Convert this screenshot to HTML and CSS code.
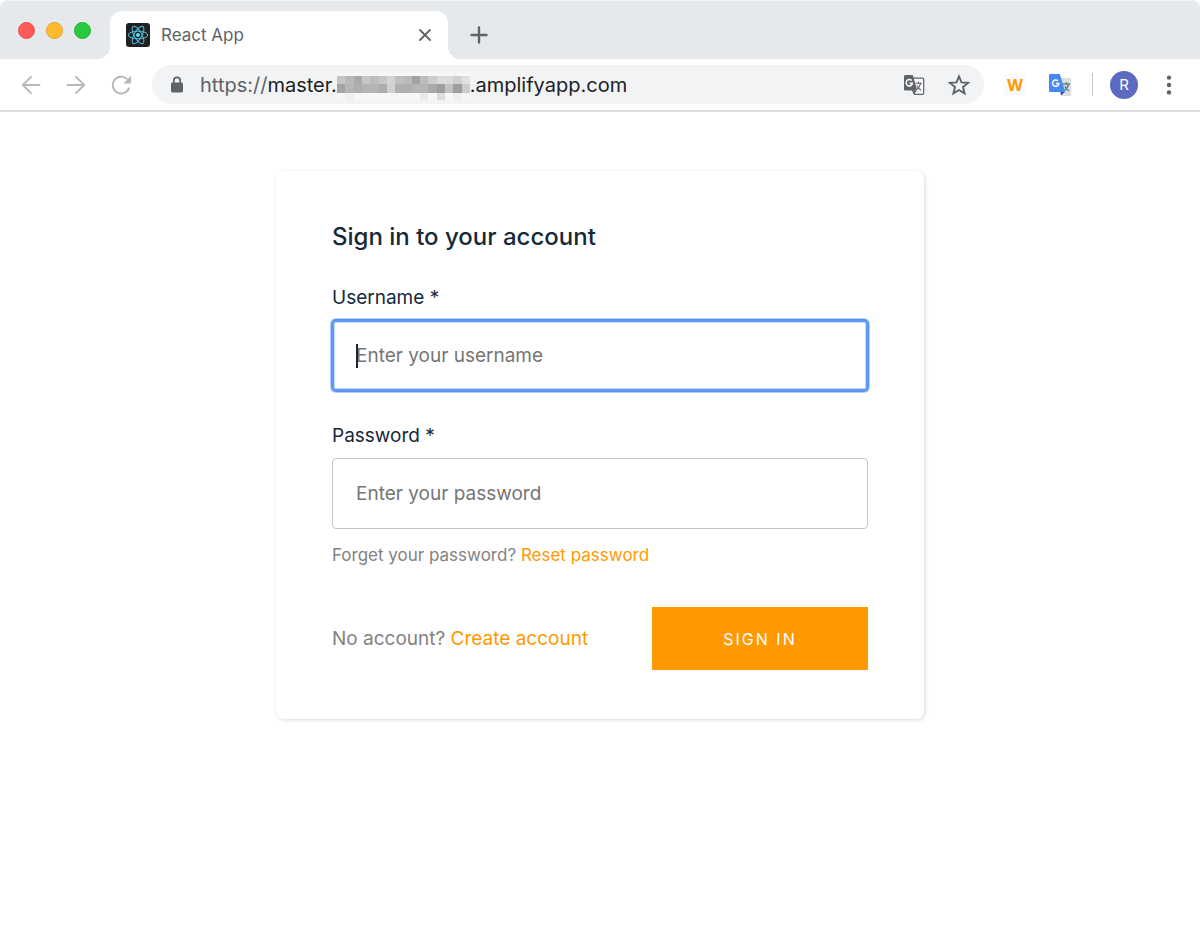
FILE: index.html
```html
<!DOCTYPE html>
<html lang="en">
<head>
    <meta charset="UTF-8">
    <meta name="viewport" content="width=device-width, initial-scale=1.0">
    <title>React App</title>
    <link rel="stylesheet" href="styles.css">
</head>
<body>
    <header class="browser">
        <div class="tab-strip">
            <div class="lights">
                <button class="light red" aria-label="Close window"></button>
                <button class="light yellow" aria-label="Minimize window"></button>
                <button class="light green" aria-label="Zoom window"></button>
            </div>
            <div class="tab">
                <svg class="favicon" viewBox="0 0 24 24">
                    <rect width="24" height="24" rx="3" fill="#1e2023"/>
                    <g fill="none" stroke="#53c1de" stroke-width="1">
                        <ellipse cx="12" cy="12" rx="9.8" ry="3.8"/>
                        <ellipse cx="12" cy="12" rx="9.8" ry="3.8" transform="rotate(60 12 12)"/>
                        <ellipse cx="12" cy="12" rx="9.8" ry="3.8" transform="rotate(120 12 12)"/>
                    </g>
                    <circle cx="12" cy="12" r="2" fill="#61dafb"/>
                </svg>
                <span class="tab-title">React App</span>
                <button class="icon-button" aria-label="Close tab">
                    <svg width="16" height="16" viewBox="0 0 16 16">
                        <path d="M3 3l10 10M13 3L3 13" fill="none" stroke="#5f6368" stroke-width="1.8" stroke-linecap="round"/>
                    </svg>
                </button>
            </div>
            <button class="icon-button" aria-label="New tab">
                <svg width="20" height="20" viewBox="0 0 20 20">
                    <path d="M10 2.5v15M2.500 10h15" fill="none" stroke="#5f6368" stroke-width="2.4" stroke-linecap="round"/>
                </svg>
            </button>
        </div>

        <div class="toolbar">
            <nav class="nav">
                <button class="icon-button" aria-label="Back">
                    <svg width="20" height="20" viewBox="0 0 20 20">
                        <path d="M18.5 10H2M10 1.8L1.8 10l8.2 8.2" fill="none" stroke="#b5b7ba" stroke-width="1.9" stroke-linecap="round"/>
                    </svg>
                </button>
                <button class="icon-button" aria-label="Forward">
                    <svg width="20" height="20" viewBox="0 0 20 20">
                        <path d="M1.5 10H18M10 1.8l8.2 8.2-8.2 8.2" fill="none" stroke="#b5b7ba" stroke-width="1.9" stroke-linecap="round"/>
                    </svg>
                </button>
                <button class="icon-button" aria-label="Reload">
                    <svg width="20" height="20" viewBox="0 0 20 20">
                        <path d="M18.2 12.6A8.4 8.4 0 1 1 16.2 4.2" fill="none" stroke="#b5b7ba" stroke-width="1.9"/>
                        <path d="M20 .8V8.4H12.4z" fill="#b5b7ba"/>
                    </svg>
                </button>
            </nav>

            <div class="address-bar">
                <svg class="lock" width="14" height="18" viewBox="0 0 14 18">
                    <rect x="1" y="6.5" width="12" height="10" rx="1.4" fill="#5f6368"/>
                    <path d="M3.8 7V4.6a3.2 3.2 0 0 1 6.4 0V7" fill="none" stroke="#5f6368" stroke-width="1.7"/>
                </svg>
                <div class="url">
                    <span class="scheme">https://</span><span>master.</span>
                    <svg class="mosaic" width="133" height="30" viewBox="0 0 16 30" preserveAspectRatio="none" shape-rendering="crispEdges">
                        <rect y="3" width="16" height="27" fill="#f6f7f8"/>
                        <g>
                            <rect x="0" y="6" width="1" height="8" fill="#c5c6c7"/>
                            <rect x="1" y="6" width="1" height="8" fill="#b9babb"/>
                            <rect x="2" y="6" width="1" height="8" fill="#a9aaab"/>
                            <rect x="3" y="6" width="1" height="8" fill="#c5c6c7"/>
                            <rect x="4" y="6" width="1" height="8" fill="#bcbdbe"/>
                            <rect x="5" y="6" width="1" height="8" fill="#c6c7c8"/>
                            <rect x="6" y="6" width="1" height="8" fill="#d3d4d5"/>
                            <rect x="7" y="6" width="1" height="8" fill="#bfc0c1"/>
                            <rect x="8" y="6" width="1" height="8" fill="#b8b9ba"/>
                            <rect x="9" y="6" width="1" height="8" fill="#a2a3a4"/>
                            <rect x="10" y="6" width="1" height="8" fill="#bcbdbe"/>
                            <rect x="11" y="6" width="1" height="8" fill="#cccdce"/>
                            <rect x="12" y="6" width="2" height="8" fill="#dadbdc"/>
                            <rect x="14" y="6" width="1" height="8" fill="#cfd0d1"/>
                            <rect x="15" y="6" width="1" height="8" fill="#dfe0e1"/>
                        </g>
                        <g>
                            <rect x="0" y="14" width="1" height="9" fill="#a3a4a5"/>
                            <rect x="1" y="14" width="1" height="9" fill="#b5b6b7"/>
                            <rect x="2" y="14" width="1" height="9" fill="#adaeaf"/>
                            <rect x="3" y="14" width="2" height="9" fill="#b3b4b5"/>
                            <rect x="5" y="14" width="1" height="9" fill="#acadae"/>
                            <rect x="6" y="14" width="1" height="9" fill="#d0d1d2"/>
                            <rect x="7" y="14" width="2" height="9" fill="#afb0b1"/>
                            <rect x="9" y="14" width="2" height="9" fill="#b4b5b6"/>
                            <rect x="11" y="14" width="1" height="9" fill="#a9aaab"/>
                            <rect x="12" y="14" width="1" height="9" fill="#9c9d9e"/>
                            <rect x="13" y="14" width="1" height="9" fill="#c2c3c4"/>
                            <rect x="14" y="14" width="1" height="9" fill="#9d9e9f"/>
                            <rect x="15" y="14" width="1" height="9" fill="#cbcccd"/>
                        </g>
                        <rect x="1" y="23" width="1" height="7" fill="#eeeff0"/>
                        <rect x="10" y="23" width="1" height="7" fill="#e8e9ea"/>
                        <rect x="12" y="23" width="1" height="7" fill="#dcddde"/>
                        <rect x="14" y="23" width="1" height="7" fill="#eeeff0"/>
                    </svg>
                    <span>.amplifyapp.com</span>
                </div>
                <button class="icon-button" aria-label="Translate this page">
                    <svg width="22" height="22" viewBox="0 0 22 22">
                        <path d="M9 4.2h10.5a1.2 1.2 0 0 1 1.2 1.2v13.8a1.2 1.2 0 0 1-1.2 1.2H11.5L9.5 16" fill="#f8f8f9" stroke="#5f6368" stroke-width="1.2"/>
                        <path d="M2.4 1h7.4l4.4 15.6H2.4A1.4 1.4 0 0 1 1 15.2V2.4A1.4 1.4 0 0 1 2.4 1z" fill="#5f6368"/>
                        <path d="M9.5 16.6h4.2l-2.6 3.8z" fill="#5f6368"/>
                        <path d="M8.7 6.6A3.2 3.2 0 1 0 9.5 9.2H6.5" fill="none" stroke="#fff" stroke-width="1.5"/>
                        <path d="M12.5 9.2h6.5M15.4 7.4v1.8M17.6 9.4c-.6 3-2 4.8-4 6.2M13.8 11.4c1 2 2.4 3.6 4.4 5" fill="none" stroke="#5f6368" stroke-width="1.1"/>
                    </svg>
                </button>
                <button class="icon-button" aria-label="Bookmark this page">
                    <svg width="22" height="22" viewBox="0 0 22 22">
                        <path d="M11 2.4l2.5 6 6.5.5-5 4.2 1.6 6.3-5.6-3.4-5.6 3.4L7 13.1 2 8.9l6.5-.5z" fill="none" stroke="#5f6368" stroke-width="1.9"/>
                    </svg>
                </button>
            </div>

            <div class="extensions">
                <button class="icon-button extension-w" aria-label="W extension">W</button>
                <button class="icon-button" aria-label="Google Translate">
                    <svg width="24" height="24" viewBox="0 0 24 24">
                        <path d="M9 5h13a1.2 1.2 0 0 1 1.2 1.2v15.6A1.2 1.2 0 0 1 22 23h-9z" fill="#dcdee0"/>
                        <path d="M12.4 18.6h4.8l-4.2 4z" fill="#3141b8"/>
                        <path d="M2.200 1h9.600l5.400 18H2.200A1.200 1.200 0 0 1 1 17.800V2.200A1.200 1.200 0 0 1 2.200 1z" fill="#4688f1"/>
                        <path d="M10 7.900A3.200 3.200 0 1 0 10.900 10.400H7.800" fill="none" stroke="#fff" stroke-width="1.5"/>
                        <path d="M15 11h7M18.400 9.200V11M20.600 11.200c-.6 3-2 5-4.200 6.400M16.800 13.200c1 2 2.200 3.400 4.400 4.800" fill="none" stroke="#607d86" stroke-width="1.4"/>
                    </svg>
                </button>
            </div>
            <span class="separator"></span>
            <button class="avatar" aria-label="Profile">R</button>
            <button class="icon-button" aria-label="Menu">
                <svg width="20" height="20" viewBox="0 0 20 20" fill="#5f6368">
                    <circle cx="10" cy="2.6" r="2.2"/>
                    <circle cx="10" cy="10" r="2.2"/>
                    <circle cx="10" cy="17.4" r="2.2"/>
                </svg>
            </button>
        </div>
    </header>

    <main class="page">
        <form class="card">
            <h1 class="card-title">Sign in to your account</h1>

            <div class="field">
                <label for="username">Username *</label>
                <div class="input-wrap">
                    <input class="input" type="text" id="username" placeholder="Enter your username" autofocus>
                    <span class="caret"></span>
                </div>
            </div>

            <div class="field">
                <label for="password">Password *</label>
                <input class="input" type="password" id="password" placeholder="Enter your password">
            </div>
            <p class="hint">Forget your password? <a href="#reset">Reset password</a></p>

            <div class="card-footer">
                <p class="signup">No account? <a href="#create">Create account</a></p>
                <button class="submit" type="submit">SIGN IN</button>
            </div>
        </form>
    </main>
</body>
</html>
```
FILE: styles.css
```css
* {
    margin: 0;
    padding: 0;
    box-sizing: border-box;
}

:root {
    --orange: #ff9900;
    --ink: #152939;
    --gray: #828282;
    --chrome: #e5e9ec;
    --icon: #5f6368;
}

body {
    min-height: 100vh;
    background: #fff;
    color: var(--ink);
    font-family: Inter, sans-serif;
}

button {
    border: none;
    background: none;
    font-family: inherit;
    cursor: pointer;
}

a {
    color: var(--orange);
    text-decoration: none;
}

svg {
    display: block;
}

.icon-button {
    display: flex;
    align-items: center;
    justify-content: center;
}

/* Browser window */
.browser {
    border-bottom: 2px solid #dcdddd;
}

.tab-strip {
    display: flex;
    align-items: center;
    height: 59px;
    padding: 11px 18px 0;
    background: var(--chrome);
    border-radius: 8px 8px 0 0;
    box-shadow: inset 0 1px #f1f3f4;
}

.lights {
    display: flex;
    gap: 11px;
    align-self: flex-start;
    padding-top: 11px;
    margin-right: 19px;
}

.light {
    width: 17px;
    height: 17px;
    border-radius: 50%;
}

.red {
    background: #fc5b57;
    border: 1px solid #e9514c;
}

.yellow {
    background: #fdbc2e;
    border: 1px solid #e3a32a;
}

.green {
    background: #28ca41;
    border: 1px solid #22b436;
}

.tab {
    position: relative;
    display: flex;
    align-items: center;
    gap: 11px;
    width: 338px;
    height: 48px;
    padding: 0 15px 0 16px;
    margin-right: 21px;
    background: #fff;
    border-radius: 12px 12px 0 0;
}

/* curved feet on both sides of the active tab */
.tab::before,
.tab::after {
    content: "";
    position: absolute;
    bottom: 0;
    width: 12px;
    height: 12px;
}

.tab::before {
    right: 100%;
    background: radial-gradient(circle at 0 0, transparent 12px, #fff 12px);
}

.tab::after {
    left: 100%;
    background: radial-gradient(circle at 100% 0, transparent 12px, #fff 12px);
}

.favicon {
    width: 24px;
    height: 24px;
}

.tab-title {
    flex: 1;
    color: var(--icon);
    font-size: 17px;
}

.toolbar {
    display: flex;
    align-items: center;
    height: 51px;
    padding: 0 21px;
    background: #fff;
}

.nav {
    display: flex;
    gap: 25px;
    margin-right: 21px;
}

.address-bar {
    flex: 1;
    display: flex;
    align-items: center;
    gap: 23px;
    height: 39px;
    padding: 0 14px 0 18px;
    background: #f1f3f4;
    border-radius: 20px;
}

.lock {
    margin-right: -7px;
}

.url {
    flex: 1;
    display: flex;
    align-items: center;
    color: #202124;
    font-size: 20px;
}

.scheme {
    color: var(--icon);
}

.extensions {
    display: flex;
    align-items: center;
    gap: 22px;
    margin: 0 20px;
}

.extension-w {
    width: 22px;
    height: 22px;
    background: #fafafa;
    color: var(--orange);
    font-size: 16px;
    font-weight: 700;
}

.separator {
    width: 1px;
    height: 23px;
    background: #c4c6c9;
}

.avatar {
    width: 28px;
    height: 28px;
    margin: 0 21px 0 17px;
    border-radius: 50%;
    background: #5c6bc0;
    color: #fff;
    font-size: 15px;
}

/* Sign in form */
.page {
    display: flex;
    justify-content: center;
    padding: 59px 16px;
}

.card {
    width: 648px;
    max-width: 100%;
    padding: 50px 56px 49px;
    border-radius: 8px;
    box-shadow: 1px 1px 4px rgba(0, 0, 0, 0.15);
}

.card-title {
    margin-bottom: 32px;
    font-size: 24px;
    font-weight: 500;
    line-height: 32px;
}

.field label {
    display: block;
    margin-bottom: 10px;
    font-size: 19px;
    line-height: 25px;
}

.field + .field {
    margin-top: 32px;
}

.input-wrap {
    position: relative;
}

.input {
    display: block;
    width: 100%;
    height: 71px;
    padding: 0 23px;
    border: 1px solid #c4c4c4;
    border-radius: 4px;
    background: #fff;
    color: var(--ink);
    caret-color: transparent;
    font-family: inherit;
    font-size: 19px;
}

.input::placeholder {
    color: #757575;
}

.input:focus {
    outline: none;
    border: 2px solid #5f9bf3;
    padding: 0 22px;
    box-shadow: 0 0 0 1px #5b94ea, 0 0 0 2px #b5d1fb, inset 0 0 0 1px #c3dafb;
}

/* the native caret is hidden, this one stays on while the field is empty */
.caret {
    display: none;
    position: absolute;
    top: 24px;
    left: 24px;
    width: 2px;
    height: 24px;
    background: var(--ink);
}

.input:focus:placeholder-shown + .caret {
    display: block;
}

.hint {
    margin-top: 16px;
    color: var(--gray);
    font-size: 17px;
    line-height: 20px;
}

.card-footer {
    display: flex;
    align-items: center;
    justify-content: space-between;
    margin-top: 42px;
}

.signup {
    color: var(--gray);
    font-size: 19px;
}

.submit {
    width: 216px;
    height: 63px;
    background: var(--orange);
    color: #fff;
    font-size: 16px;
    letter-spacing: 2px;
}
```
